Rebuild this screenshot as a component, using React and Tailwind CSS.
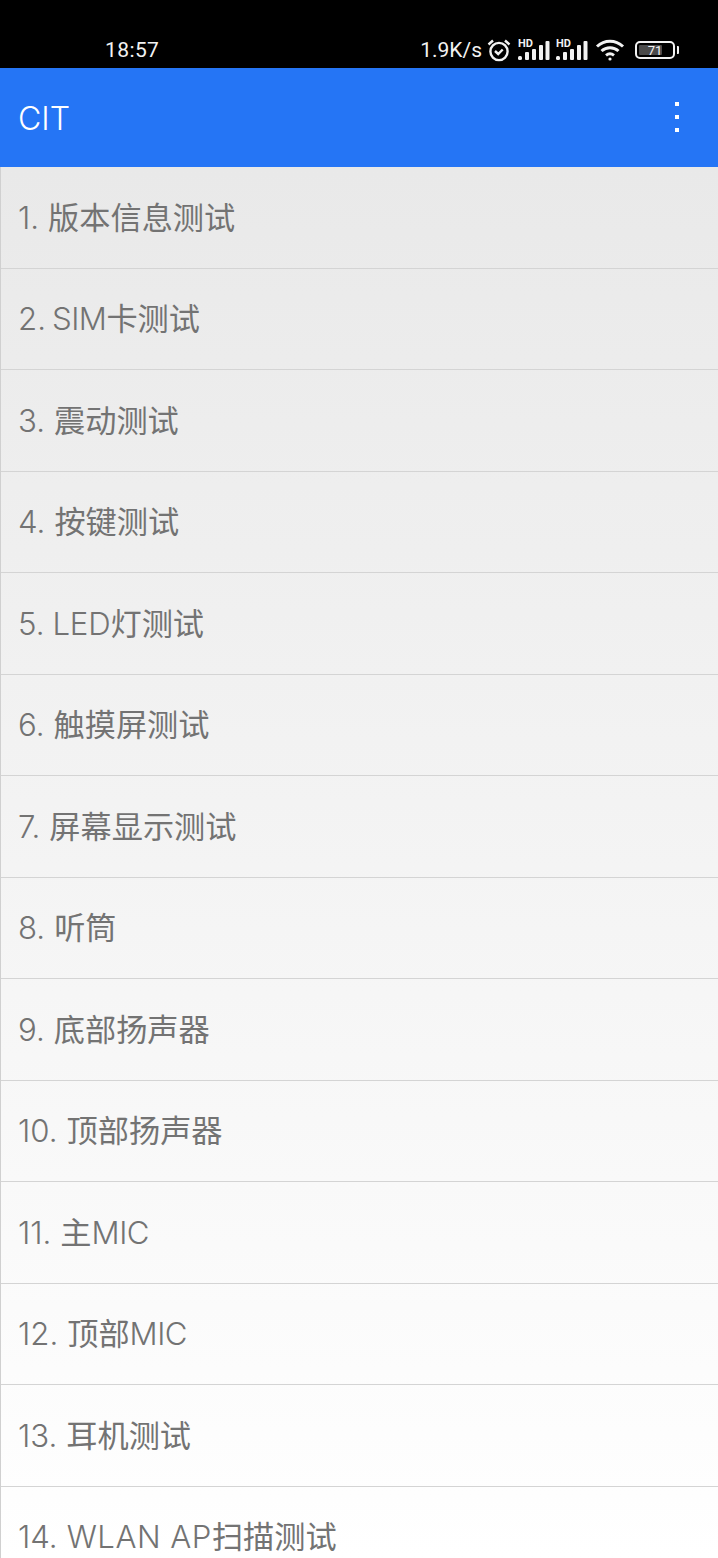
const items = [
  ["1.", "", "版本信息测试"],
  ["2.", "SIM", "卡测试"],
  ["3.", "", "震动测试"],
  ["4.", "", "按键测试"],
  ["5.", "LED", "灯测试"],
  ["6.", "", "触摸屏测试"],
  ["7.", "", "屏幕显示测试"],
  ["8.", "", "听筒"],
  ["9.", "", "底部扬声器"],
  ["10.", "", "顶部扬声器"],
  ["11.", "", "主", "MIC"],
  ["12.", "", "顶部", "MIC"],
  ["13.", "", "耳机测试"],
  ["14.", "WLAN AP", "扫描测试"],
];

const inter = { fontFamily: "Inter, sans-serif" };

const latinClass = {
  SIM: "font-light -ml-[3px] tracking-[-0.5px]",
  LED: "font-light -ml-[1px] tracking-[-0.2px]",
  "WLAN AP": "font-light tracking-[0.5px]",
};

function Signal() {
  return (
    <svg width="32" height="24" viewBox="0 0 32 24" fill="#f2f2f2">
      <text x="0" y="9" fontSize="11" fontWeight="700" fontFamily="Roboto, sans-serif">HD</text>
      <rect x="0" y="18" width="4" height="4" rx="1.5" />
      <rect x="7" y="14" width="4" height="8" rx="1" />
      <rect x="14" y="11" width="4" height="11" rx="1" />
      <rect x="21" y="7" width="4" height="15" rx="1" />
      <rect x="27.5" y="3" width="4" height="19" rx="1" />
    </svg>
  );
}

export default function App() {
  return (
    <div className="w-[718px] h-[1558px] overflow-hidden bg-white" style={{ fontFamily: "Roboto, 'Noto Sans CJK SC', sans-serif" }}>
      <div className="h-[68px] bg-black text-[#f2f2f2] flex items-end pb-[5px] pl-[105px] pr-[43px] justify-between">
        <span className="text-[21px] leading-[25px] tracking-[0.4px]">18:57</span>
        <div className="flex items-center h-[26px]">
          <span className="text-[21px] leading-[25px]">1.9K/s</span>
          <svg className="ml-[5px]" width="24" height="24" viewBox="0 0 24 24" fill="none" stroke="#f2f2f2" strokeWidth="2.4">
            <circle cx="12" cy="13.5" r="8.6" />
            <path d="M8 13l3.2 3 4.5-4.5M1.5 6.5L6 2.5M22.5 6.5L18 2.5" />
          </svg>
          <div className="ml-[7px] flex gap-[6px]"><Signal /><Signal /></div>
          <svg className="ml-[7px]" width="30" height="24" viewBox="0 0 30 24" fill="none" stroke="#f2f2f2" strokeWidth="3">
            <path d="M2 8.5C9.5 1.5 20.5 1.5 28 8.5" />
            <path d="M6.5 13c5-4.5 12-4.5 17 0" />
            <path d="M11 17.3c2.5-2 5.5-2 8 0" />
            <circle cx="15" cy="21" r="1.6" fill="#f2f2f2" stroke="none" />
          </svg>
          <div className="ml-[10px] relative w-[40px] h-[18px] rounded-[5px] border-2 border-[#f2f2f2] p-[2px]">
            <div className="w-[71%] h-full bg-[#4a4a4a] rounded-[1px]" />
            <span className="absolute inset-0 flex items-center justify-center text-[13px] leading-none">71</span>
            <div className="absolute right-[-6px] top-[3px] w-[2px] h-[8px] bg-[#f2f2f2] rounded-r-[1px]" />
          </div>
        </div>
      </div>
      <div className="h-[99px] bg-[#2575f5] flex items-center justify-between pl-[18px] pr-[39px]">
        <span className="text-white text-[32px] leading-none font-light mt-[2px]" style={inter}>CIT</span>
        <div className="flex flex-col gap-[9px] mb-[2px]">
          <div className="w-[4px] h-[4px] bg-white" />
          <div className="w-[4px] h-[4px] bg-white" />
          <div className="w-[4px] h-[4px] bg-white" />
        </div>
      </div>
      <div className="h-[1391px] overflow-hidden border-l border-[#d0d0d0] bg-gradient-to-b from-[#e9e9e9] to-white">
        {items.map(([n, latin, cjk, tail]) => (
          <div key={n} className="h-[101.5px] border-b border-[#d4d4d4] flex items-center pl-[17px] pt-[2px] text-[31.2px] leading-none text-[#737373] whitespace-pre">
            <span className="font-light mr-[9px]" style={inter}>{n}</span>
            {latin && <span className={latinClass[latin]} style={inter}>{latin}</span>}
            <span>{cjk}</span>
            {tail && <span className="font-light tracking-[-0.5px]" style={inter}>{tail}</span>}
          </div>
        ))}
      </div>
    </div>
  );
}
